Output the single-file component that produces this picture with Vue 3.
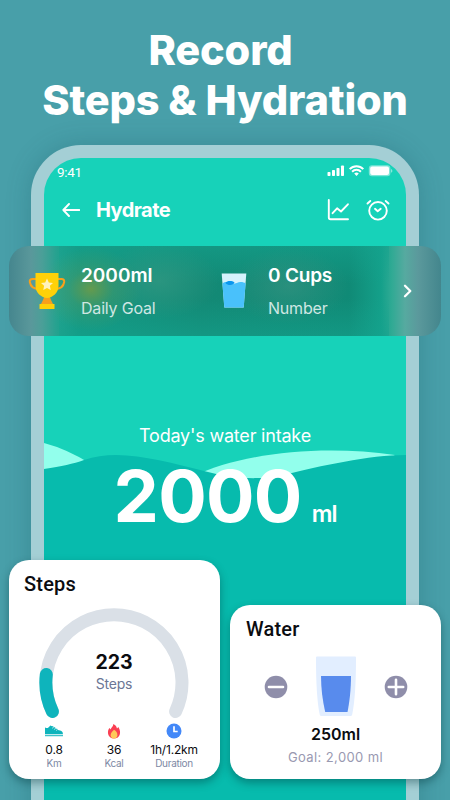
<template>
  <div class="page">
    <h1 class="headline">
      <span class="line-one">Record</span>
      <span class="line-two">Steps &amp; Hydration</span>
    </h1>

    <div class="phone">
      <div class="screen">
        <div class="status-bar">
          <span>9:41</span>
          <svg width="66" height="14" viewBox="0 0 66 14" fill="#fff">
            <rect x="0.5" y="8" width="3" height="4" rx="0.8" />
            <rect x="5" y="6" width="3" height="6" rx="0.8" />
            <rect x="9.5" y="4" width="3" height="8" rx="0.8" />
            <rect x="14" y="1.5" width="3" height="10.5" rx="0.8" />
            <g fill="none" stroke="#fff" stroke-width="2">
              <path d="M22.7 5.1a9.6 9.6 0 0 1 13.6 0" />
              <path d="M25.1 7.7a6.2 6.2 0 0 1 8.8 0" />
            </g>
            <path d="M27.2 9.5a3.4 3.4 0 0 1 4.6 0L29.5 12z" />
            <rect x="41.8" y="1.3" width="21.6" height="11" rx="3.2" opacity="0.45" />
            <rect x="43.2" y="2.6" width="18.8" height="8.4" rx="2" />
            <path d="M64.2 5v3.8c1.5-.7 1.5-3.1 0-3.8z" opacity="0.6" />
          </svg>
        </div>

        <div class="nav-bar">
          <svg class="back" width="18" height="14" viewBox="0 0 18 14">
            <path d="M7 1 1.3 7 7 13M1.3 7H17.3" />
          </svg>
          <span class="nav-title">Hydrate</span>
          <svg class="nav-icon" width="22" height="22" viewBox="0 0 22 22">
            <path d="M1.8 1v17.6q0 1.7 1.7 1.7H21M5.6 14.2l4.5-4.9 3.9 3.2 6.9-7.2" />
          </svg>
          <svg class="nav-icon" width="24" height="22" viewBox="0 0 24 22">
            <circle cx="12" cy="11.8" r="8.8" />
            <path d="M9 9.800l2.700 2.500 3-2.500M1.500 4.500 4.300 2M22.500 4.500 19.700 2" />
          </svg>
        </div>

        <div class="intake">
          <svg class="waves" width="362" height="360" viewBox="0 0 362 360">
            <path d="M0 3Q23 9 47 24L0 35z" fill="#92ffec" />
            <path d="M150 36C195 14 275 4 351 15L300 50H180z" fill="#92ffec" />
            <path
              d="M0 29C18 26 29 24 40 20C75 8 115 20 164 32C190 39 217 40 240 35C276 26 325 15 362 15V360H0z"
              fill="#07bbad"
            />
          </svg>
          <div class="intake-label">Today's water intake</div>
          <div class="intake-value">
            <strong>2000</strong>
            <span>ml</span>
          </div>
        </div>
      </div>
    </div>

    <div class="goal-bar">
      <svg class="trophy" width="38" height="38" viewBox="0 0 38 38">
        <path
          d="M8 7H4.5Q1.5 7 1.8 10Q3 17 11 17M30 7h3.500Q36.500 7 36.200 10Q35 17 27 17"
          fill="none"
          stroke="#f9a01b"
          stroke-width="2"
        />
        <path d="M16.500 24h5l1.500 4 2.500 5h-13l2.500-5z" fill="#f9a01b" />
        <path d="M7.500 1h23v13c0 7-6 11.500-11.500 12C13.500 25.500 7.500 21 7.500 14z" fill="#ffd109" />
        <rect x="11.500" y="32" width="15" height="5" rx="0.5" fill="#ffd109" />
        <path
          d="M19 6.500l1.800 3.900 4.200.5-3.100 2.900.8 4.200-3.700-2.100-3.700 2.100.8-4.200L13 10.900l4.200-.5z"
          fill="#fff2bd"
        />
      </svg>
      <div class="goal-item">
        <b>2000ml</b>
        <span>Daily Goal</span>
      </div>
      <svg class="cup" width="26" height="36" viewBox="0 0 26 36">
        <path d="M0.700 0.500h24.600L22.700 34.500H3.300z" fill="#d5f2fc" />
        <path d="M1.400 10.500C4 8.500 6 9 8 9.700C13 12.500 16 9 19.500 9C22 9 23.500 9.500 24.600 10.500L22.700 34.500H3.300z" fill="#49c1fb" />
        <path d="M4.500 10C6 7.500 11 7.500 13.500 9.500C12.500 12.500 7 13 4.500 10z" fill="#0a96ee" />
      </svg>
      <div class="goal-item">
        <b>0 Cups</b>
        <span>Number</span>
      </div>
      <svg class="chevron" width="10" height="14" viewBox="0 0 10 14">
        <path d="M2 1.800 7.300 7 2 12.200" />
      </svg>
    </div>

    <section class="card steps-card">
      <h2>Steps</h2>
      <div class="gauge">
        <svg width="150" height="111" viewBox="0 0 150 111">
          <path d="M13.400 104.500A68 68 0 1 1 136.600 104.500" stroke="#dae0e7" />
          <path d="M13.400 104.500A68 68 0 0 1 7.300 67.500" stroke="#0eb4bc" />
        </svg>
        <div class="gauge-text">
          <b>223</b>
          <span>Steps</span>
        </div>
      </div>
      <div class="stats">
        <div v-for="item in stats" :key="item.label" class="stat">
          <svg v-if="item.icon === 'shoe'" width="18" height="16" viewBox="0 0 18 16" fill="#0eb4bc">
            <path d="M0 4.200Q1.700 6 3.700 4.200L5.400 2.600Q6.700 3.300 8 3.100L8.700 4.300 10 4.200l.8 1.500 1.400.1.800 1.200 3 .8Q18 8.600 18 11.200H0z" />
            <path d="M0 12.200h18v1H0z" />
            <path d="M7 5.300l1.700-1M9 6.500l1.700-1M11 7.600l1.500-1" stroke="#fff" stroke-width="0.600" />
          </svg>
          <svg v-else-if="item.icon === 'fire'" width="14" height="16" viewBox="0 0 14 16">
            <path d="M6.200 1C9 1.900 9.500 4.200 10 5.500L11.400 4C13.200 7 13.500 9.500 12.600 12C11.700 14.500 9.500 15.500 7 15.500C4 15.500 1.600 13.700 1.100 11C.6 8 1.500 6 2.500 5L3.700 6.500C4 4.500 6.500 3.500 6.200 1z" fill="#fa3f53" />
            <path d="M7 6.800C9 8 10.700 10 10.400 12.400C10.200 14.500 8.800 15.500 7 15.500S3.800 14.500 3.600 12.400C3.500 10 5.500 8.500 7 6.800z" fill="#ffc95a" />
          </svg>
          <svg v-else width="16" height="16" viewBox="0 0 16 16">
            <circle cx="8" cy="8" r="7.500" fill="#4388f8" />
            <path d="M8 3.200v5.300h3.700" fill="none" stroke="#fff" stroke-width="1.700" />
          </svg>
          <b>{{ item.value }}</b>
          <span>{{ item.label }}</span>
        </div>
      </div>
    </section>

    <section class="card water-card">
      <h2>Water</h2>
      <div class="water-row">
        <svg width="24" height="24" viewBox="0 0 24 24">
          <circle cx="12" cy="12" r="11.300" fill="#8f8eaa" />
          <path d="M5 12h14" class="sign" />
        </svg>
        <svg width="42" height="61" viewBox="0 0 42 61">
          <path d="M2 .5h38q1 0 1 1c0 27-1.200 44-3.800 57q-.3 1.500-1.700 1.500h-29Q5 60 4.700 58.500C2.200 45.500 1 28.500 1 1.500q0-1 1-1z" fill="#e2eeff" />
          <path d="M6 20h30c0 13-1.500 26-3.500 36H10.200C7.700 45 6 33 6 20z" fill="#588bed" />
        </svg>
        <svg width="24" height="24" viewBox="0 0 24 24">
          <circle cx="12" cy="12" r="11.300" fill="#8f8eaa" />
          <path d="M4.800 12h14.400M12 4.800v14.400" class="sign" />
        </svg>
      </div>
      <b class="amount">250ml</b>
      <span class="target">Goal: 2,000 ml</span>
    </section>
  </div>
</template>

<script setup>
import { ref } from 'vue'

const stats = ref([
  { icon: 'shoe', value: '0.8', label: 'Km' },
  { icon: 'fire', value: '36', label: 'Kcal' },
  { icon: 'clock', value: '1h/1.2km', label: 'Duration' }
])
</script>

<style>
body {
  margin: 0;
}
</style>

<style scoped>
.page {
  position: relative;
  width: 450px;
  height: 800px;
  overflow: hidden;
  background: #489fa9;
  font-family: Inter, "Liberation Sans", sans-serif;
  color: #fff;
}

.page svg {
  display: block;
  flex-shrink: 0;
}

.headline {
  margin: 0;
  padding-top: 25px;
  height: 120px;
  font-size: 41.5px;
  line-height: 50px;
  font-weight: 800;
  letter-spacing: -0.15px;
  text-align: center;
}

.headline span {
  display: block;
  white-space: nowrap;
}

.line-one {
  padding-right: 9px;
}

.phone {
  box-sizing: border-box;
  width: 388px;
  height: 720px;
  margin: 0 31px;
  padding: 13px 13px 0;
  border-radius: 50px 50px 0 0;
  background: #a4cfd5;
  box-shadow: 0 0 24px rgba(20, 80, 90, 0.25);
}

.screen {
  height: 707px;
  border-radius: 37px 37px 0 0;
  background: #17d2b9;
  overflow: hidden;
}

.status-bar {
  display: flex;
  justify-content: space-between;
  padding: 6px 13px 0 13px;
  height: 16px;
  font-family: Roboto, sans-serif;
  font-size: 13.5px;
  line-height: 16px;
  letter-spacing: -0.3px;
}

.nav-bar {
  display: flex;
  align-items: center;
  height: 24px;
  margin-top: 18px;
  padding: 0 16px 0 18px;
}

.nav-bar path,
.nav-bar circle,
.chevron path {
  fill: none;
  stroke: #fff;
  stroke-width: 1.9;
  stroke-linecap: round;
  stroke-linejoin: round;
}

.nav-title {
  flex: 1;
  margin-left: 16px;
  font-size: 20px;
  font-weight: 700;
  letter-spacing: -0.55px;
}

.nav-icon + .nav-icon {
  margin-left: 17px;
}

.intake {
  position: relative;
  margin-top: 218px;
  height: 360px;
}

.waves {
  position: absolute;
  left: 0;
  top: 0;
}

.intake-label,
.intake-value {
  position: relative;
}

.intake-label {
  top: -15px;
  text-align: center;
  font-size: 18px;
  line-height: 22px;
  letter-spacing: -0.2px;
}

.intake-value {
  display: flex;
  align-items: baseline;
  justify-content: center;
  margin-top: -4px;
  line-height: 76px;
}

.intake-value strong {
  font-size: 72px;
  font-weight: 700;
  letter-spacing: -0.7px;
}

.intake-value span {
  margin-left: 10px;
  font-size: 23px;
  font-weight: 600;
  letter-spacing: -1px;
}

.goal-bar {
  position: absolute;
  left: 9px;
  top: 246px;
  display: flex;
  align-items: center;
  box-sizing: border-box;
  width: 432px;
  height: 90px;
  padding: 0 28px 0 19px;
  border-radius: 20px;
  background:
    radial-gradient(50px 42px at 82px 43px, rgba(135, 157, 58, 0.7), rgba(90, 155, 95, 0.35) 45%, rgba(30, 150, 125, 0)),
    radial-gradient(60px 38px at 150px 35px, rgba(52, 152, 130, 0.7), rgba(52, 152, 130, 0)),
    radial-gradient(60px 38px at 280px 40px, rgba(52, 146, 128, 0.7), rgba(52, 146, 128, 0)),
    linear-gradient(180deg, rgba(20, 163, 142, 0.55), rgba(20, 163, 142, 0) 42%, rgba(20, 163, 142, 0) 58%, rgba(20, 163, 142, 0.55)) 50px 0 / 330px 90px no-repeat,
    linear-gradient(90deg, #45868e 0, #5a989b 22px, #4b9f98 33px, #24a28f 48px, #139681 70px, #138975 190px, #108a76 340px, #14a08a 372px, #30aa94 383px, #56aaa0 396px, #5b999c 409px, #43868d 432px);
}

.goal-item {
  display: flex;
  flex-direction: column;
  width: 140px;
  margin-left: 15px;
}

.goal-item b {
  font-size: 19px;
  line-height: 24px;
  font-weight: 600;
  letter-spacing: 0;
}

.goal-item span {
  margin-top: 9px;
  font-size: 16px;
  line-height: 22px;
  letter-spacing: -0.2px;
  color: #cfe7e3;
}

.cup + .goal-item {
  margin-left: 21px;
  width: 135px;
}

.cup + .goal-item b {
  letter-spacing: -0.2px;
}

.chevron path {
  stroke-width: 2.3;
}

.card {
  position: absolute;
  box-sizing: border-box;
  border-radius: 20px;
  background: #fff;
  box-shadow: 0 4px 9px rgba(0, 50, 55, 0.4);
  color: #0b0c10;
}

.card h2 {
  margin: 0;
  font-family: Roboto, sans-serif;
  font-size: 20px;
  line-height: 24px;
  font-weight: 500;
  letter-spacing: 0.2px;
}

.steps-card {
  left: 9px;
  top: 560px;
  width: 211px;
  height: 219px;
  padding-top: 12px;
}

.steps-card h2 {
  margin-left: 15px;
}

.gauge {
  position: relative;
  width: 150px;
  margin: 11px 0 0 30px;
}

.gauge path {
  fill: none;
  stroke-width: 13;
  stroke-linecap: round;
}

.gauge-text {
  position: absolute;
  left: 0;
  right: 0;
  top: 43px;
  display: flex;
  flex-direction: column;
  align-items: center;
}

.gauge-text b {
  font-size: 19.5px;
  line-height: 25px;
  font-weight: 700;
  letter-spacing: -0.1px;
}

.gauge-text span {
  font-size: 14px;
  line-height: 17px;
  letter-spacing: -0.2px;
  color: #6b7695;
}

.stats {
  display: flex;
  margin: 5px 15px 0;
}

.stat {
  display: flex;
  flex-direction: column;
  align-items: center;
  width: 60px;
}

.stat b {
  margin-top: 3px;
  font-size: 12px;
  line-height: 15px;
  font-weight: 400;
  letter-spacing: -0.2px;
  white-space: nowrap;
}

.stat span {
  font-size: 10px;
  line-height: 13px;
  letter-spacing: -0.3px;
  color: #7d88a3;
}

.water-card {
  left: 230px;
  top: 605px;
  display: flex;
  flex-direction: column;
  align-items: center;
  width: 211px;
  height: 174px;
  padding-top: 12px;
}

.water-card h2 {
  align-self: flex-start;
  margin-left: 16px;
}

.water-row {
  display: flex;
  align-items: center;
  gap: 27px;
  margin-top: 15px;
}

.sign {
  fill: none;
  stroke: #fff;
  stroke-width: 2.6;
  stroke-linecap: round;
}

.amount {
  margin-top: 7px;
  font-size: 16px;
  line-height: 20px;
  font-weight: 600;
}

.target {
  margin-top: 5px;
  font-size: 13px;
  line-height: 16px;
  letter-spacing: 0.4px;
  color: #9999b1;
}
</style>
